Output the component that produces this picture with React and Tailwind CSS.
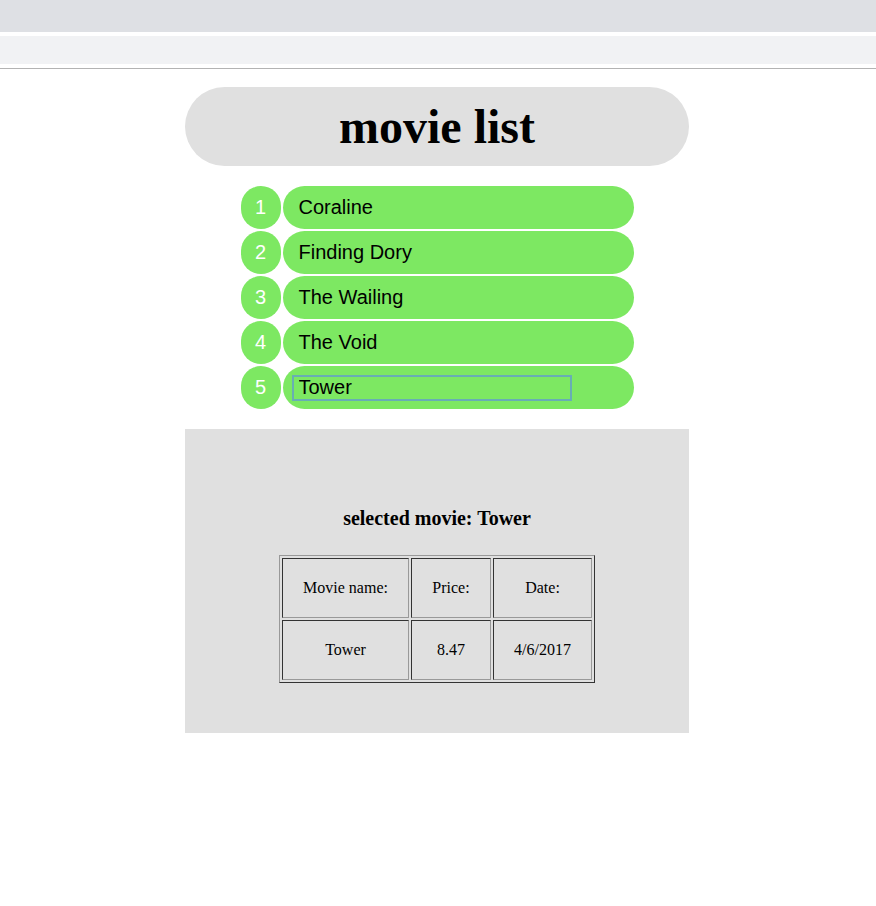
import React from "react";

const movies = [
  { id: 1, name: "Coraline" },
  { id: 2, name: "Finding Dory" },
  { id: 3, name: "The Wailing" },
  { id: 4, name: "The Void" },
  { id: 5, name: "Tower", editing: true },
];

function MovieRow({ movie }) {
  return (
    <li className="flex gap-[2px] h-[43px]">
      {/* number badge */}
      <div className="w-[40px] h-[43px] rounded-full bg-[#7de862] text-white text-[20px] flex items-center justify-center pb-[2px]">
        {movie.id}
      </div>
      {/* title pill */}
      {movie.editing ? (
        <div className="w-[351px] h-[43px] rounded-full bg-[#7de862] flex items-center pl-[9px]">
          <input
            readOnly
            defaultValue={movie.name}
            className="w-[280px] h-[26px] border-2 border-[#68aeb4] bg-transparent pl-[5px] pb-[2px] text-[20px] text-black outline-none font-['Liberation_Sans',Arial,sans-serif]"
          />
        </div>
      ) : (
        <div className="w-[351px] h-[43px] rounded-full bg-[#7de862] flex items-center pl-[16px] pb-[2px] text-[20px] text-black">
          {movie.name}
        </div>
      )}
    </li>
  );
}

export default function App() {
  const selected = { name: "Tower", price: "8.47", date: "4/6/2017" };
  const cell =
    "border border-t-[#333] border-l-[#333] border-b-[#999] border-r-[#999] h-[60px] text-center align-middle text-[16px] font-normal p-0";

  return (
    <div className="min-h-[906px] bg-white font-['Liberation_Sans',Arial,sans-serif]">
      {/* browser-ish chrome bars */}
      <div className="h-[32px] bg-[#dee0e4]" />
      <div className="h-[4px] bg-white" />
      <div className="h-[28px] bg-[#f1f2f4]" />
      <div className="h-[4px] bg-white" />
      <div className="h-[1px] bg-[#b3b3b3]" />

      <div className="w-[504px] ml-[185px] pt-[18px] flex flex-col items-center">
        <div className="w-[504px] h-[79px] rounded-full bg-[#e0e0e0] flex items-center justify-center">
          <h1 className="font-['Liberation_Serif','Times_New_Roman',serif] font-bold text-[48px] leading-none text-black">
            movie list
          </h1>
        </div>

        <ul className="mt-[20px] flex flex-col gap-[2px]">
          {movies.map((m) => (
            <MovieRow key={m.id} movie={m} />
          ))}
        </ul>

        <div className="mt-[20px] w-[504px] bg-[#e0e0e0] pt-[77px] pb-[50px] flex flex-col items-center font-['Liberation_Serif','Times_New_Roman',serif] text-black">
          <h3 className="text-[20px] font-bold leading-[24px]">
            selected movie: {selected.name}
          </h3>
          <table className="mt-[25px] border-separate border-spacing-[2px] border border-t-[#999] border-l-[#999] border-b-[#333] border-r-[#333]">
            <tbody>
              <tr>
                <td className={`${cell} w-[127px]`}>Movie name:</td>
                <td className={`${cell} w-[80px]`}>Price:</td>
                <td className={`${cell} w-[99px]`}>Date:</td>
              </tr>
              <tr>
                <td className={`${cell} w-[127px]`}>{selected.name}</td>
                <td className={`${cell} w-[80px]`}>{selected.price}</td>
                <td className={`${cell} w-[99px]`}>{selected.date}</td>
              </tr>
            </tbody>
          </table>
        </div>
      </div>
    </div>
  );
}
